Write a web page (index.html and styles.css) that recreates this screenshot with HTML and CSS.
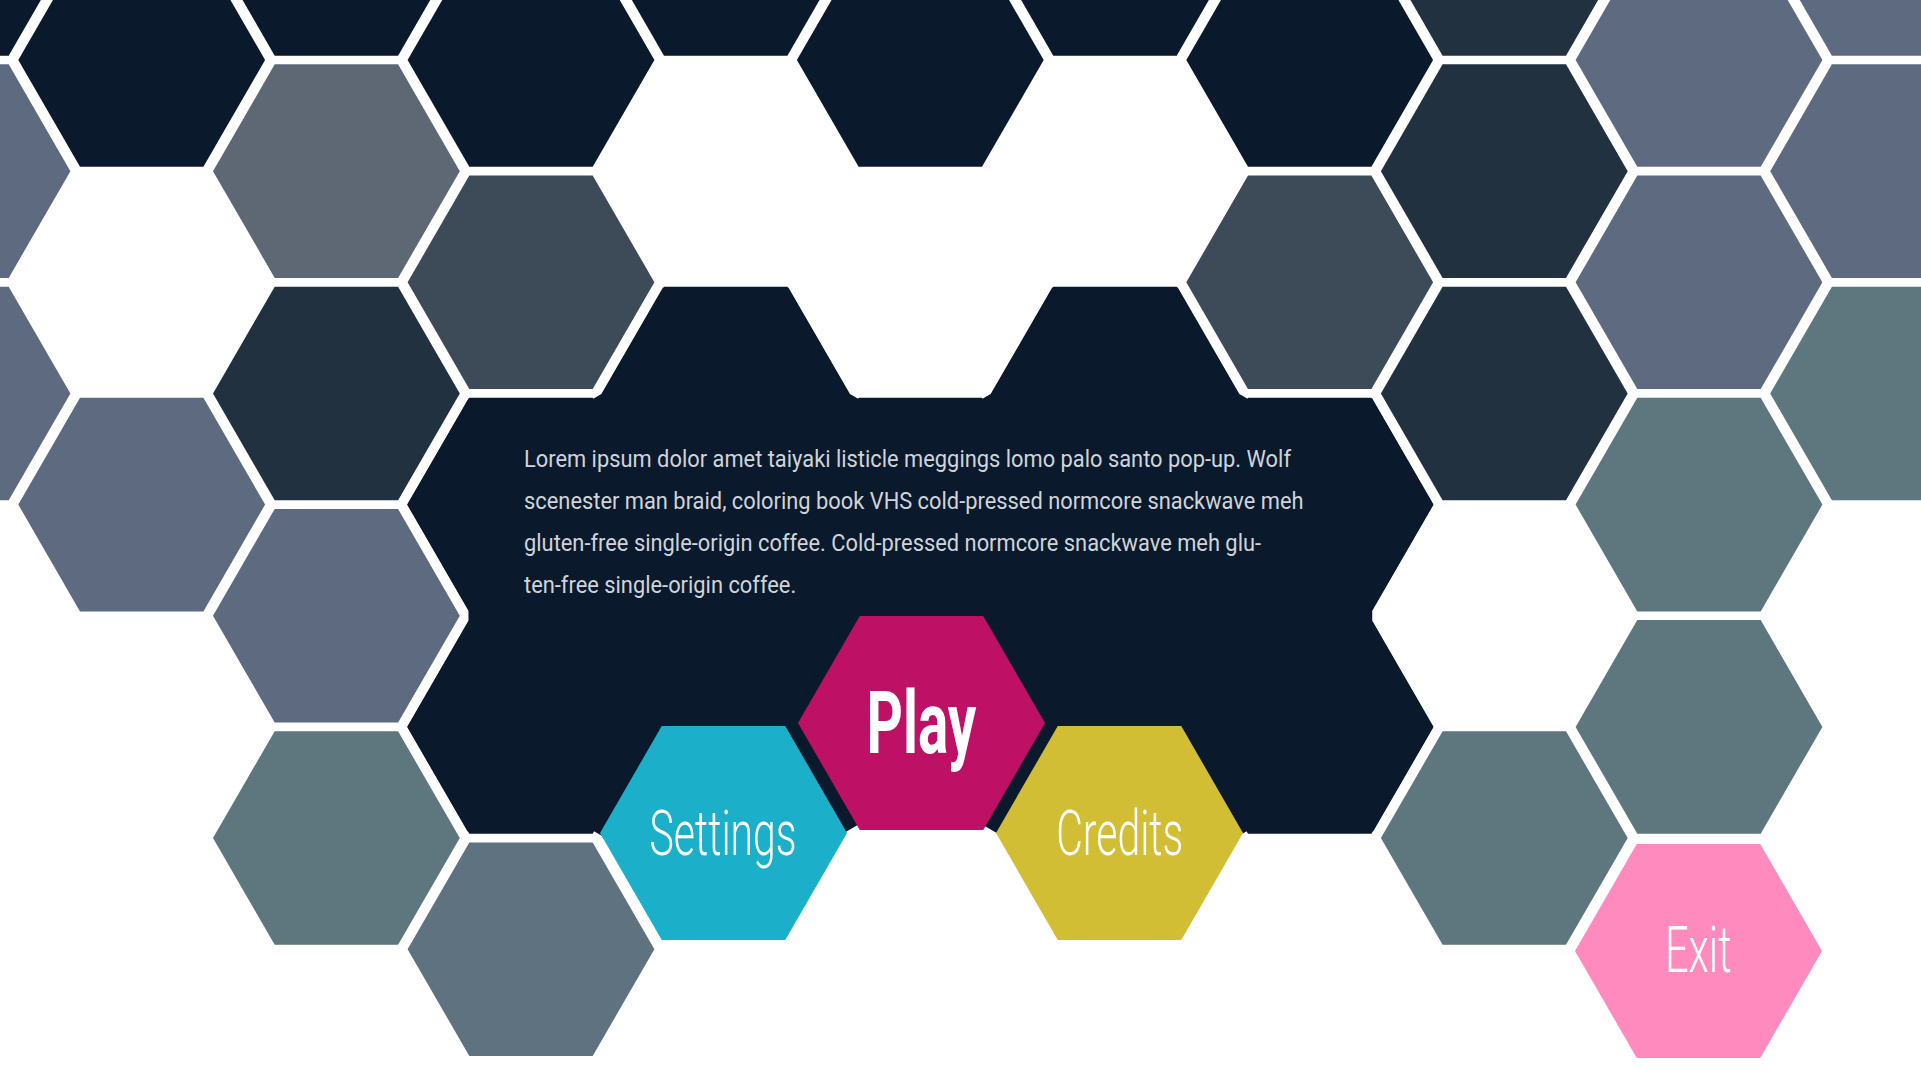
FILE: index.html
```html
<!DOCTYPE html>
<html lang="en">
<head>
<meta charset="utf-8">
<title>Hex Menu</title>
<link rel="stylesheet" href="styles.css">
</head>
<body>
<main class="stage">
  <svg class="mosaic" width="1921" height="1081" viewBox="0 0 1921 1081" aria-hidden="true">
    <defs>
      <polygon id="hx" points="-123.4,0 -61.7,-106.8 61.7,-106.8 123.4,0 61.7,106.8 -61.7,106.8"/>
      <polygon id="hxBig" points="-131.5,0 -65.7,-113.8 65.7,-113.8 131.5,0 65.7,113.8 -65.7,113.8"/>
    </defs>

    <!-- panel: enlarged cells fill the gaps between them -->
    <g class="navy">
      <use href="#hxBig" x="531" y="504.6"/>
      <use href="#hxBig" x="531" y="726.9"/>
      <use href="#hxBig" x="725.7" y="393.45"/>
      <use href="#hxBig" x="725.7" y="615.75"/>
      <use href="#hxBig" x="920.3" y="504.6"/>
      <use href="#hxBig" x="1115" y="393.45"/>
      <use href="#hxBig" x="1115" y="615.75"/>
      <use href="#hxBig" x="1309.7" y="504.6"/>
      <use href="#hxBig" x="1309.7" y="726.9"/>
      <use href="#hxBig" x="723.5" y="833"/>
      <use href="#hxBig" x="921.7" y="722.8"/>
      <use href="#hxBig" x="1119.6" y="833"/>
    </g>

    <!-- white gaps around the panel -->
    <g class="mask">
      <use href="#hx" x="336.4" y="393.45"/>
      <use href="#hx" x="336.4" y="615.75"/>
      <use href="#hx" x="336.4" y="838.05"/>
      <use href="#hx" x="531" y="282.3"/>
      <use href="#hx" class="mask-m" x="531" y="949.2"/>
      <use href="#hx" x="725.7" y="171.15"/>
      <use href="#hx" class="mask-l" x="725.7" y="1060.35"/>
      <use href="#hx" x="920.3" y="282.3"/>
      <use href="#hx" class="mask-xl" x="920.3" y="949.2"/>
      <use href="#hx" x="1115" y="171.15"/>
      <use href="#hx" class="mask-l" x="1115" y="1060.35"/>
      <use href="#hx" x="1309.7" y="282.3"/>
      <use href="#hx" class="mask-m" x="1309.7" y="949.2"/>
      <use href="#hx" x="1504.3" y="393.45"/>
      <use href="#hx" x="1504.3" y="615.75"/>
      <use href="#hx" x="1504.3" y="838.05"/>
    </g>

    <!-- cells -->
    <g class="navy">
      <use href="#hx" x="-53" y="-51.15"/>
      <use href="#hx" x="141.7" y="60"/>
      <use href="#hx" x="336.4" y="-51.15"/>
      <use href="#hx" x="531" y="60"/>
      <use href="#hx" x="725.7" y="-51.15"/>
      <use href="#hx" x="920.3" y="60"/>
      <use href="#hx" x="1115" y="-51.15"/>
      <use href="#hx" x="1309.7" y="60"/>
      <use href="#hx" x="531" y="504.6"/>
      <use href="#hx" x="531" y="726.9"/>
      <use href="#hx" x="725.7" y="393.45"/>
      <use href="#hx" x="725.7" y="615.75"/>
      <use href="#hx" x="920.3" y="504.6"/>
      <use href="#hx" x="1115" y="393.45"/>
      <use href="#hx" x="1115" y="615.75"/>
      <use href="#hx" x="1309.7" y="504.6"/>
      <use href="#hx" x="1309.7" y="726.9"/>
    </g>
    <g class="lavender">
      <use href="#hx" x="-53" y="171.15"/>
      <use href="#hx" x="-53" y="393.45"/>
      <use href="#hx" x="141.7" y="504.6"/>
      <use href="#hx" x="336.4" y="615.75"/>
      <use href="#hx" x="1699" y="60"/>
      <use href="#hx" x="1699" y="282.3"/>
      <use href="#hx" x="1893.6" y="-51.15"/>
      <use href="#hx" x="1893.6" y="171.15"/>
    </g>
    <g class="gray">
      <use href="#hx" x="336.4" y="171.15"/>
    </g>
    <g class="darkslate">
      <use href="#hx" x="336.4" y="393.45"/>
      <use href="#hx" x="1504.3" y="-51.15"/>
      <use href="#hx" x="1504.3" y="171.15"/>
      <use href="#hx" x="1504.3" y="393.45"/>
    </g>
    <g class="slate">
      <use href="#hx" x="531" y="282.3"/>
      <use href="#hx" x="1309.7" y="282.3"/>
    </g>
    <g class="teal">
      <use href="#hx" x="336.4" y="838.05"/>
      <use href="#hx" x="1504.3" y="838.05"/>
      <use href="#hx" x="1699" y="504.6"/>
      <use href="#hx" x="1699" y="726.9"/>
      <use href="#hx" x="1893.6" y="393.45"/>
    </g>
    <g class="steel">
      <use href="#hx" x="531" y="949.2"/>
    </g>
  </svg>

  <p class="intro">
    <span class="line">Lorem ipsum dolor amet taiyaki listicle meggings lomo palo santo pop-up. Wolf</span>
    <span class="line">scenester man braid, coloring book VHS cold-pressed normcore snackwave meh</span>
    <span class="line">gluten-free single-origin coffee. Cold-pressed normcore snackwave meh glu-</span>
    <span class="line">ten-free single-origin coffee.</span>
  </p>

  <nav class="menu">
    <button class="hex settings" type="button"><span class="label">Settings</span></button>
    <button class="hex play" type="button"><span class="label">Play</span></button>
    <button class="hex credits" type="button"><span class="label">Credits</span></button>
  </nav>

  <button class="hex exit" type="button"><span class="label">Exit</span></button>
</main>
</body>
</html>
```

FILE: styles.css
```css
html, body {
  margin: 0;
  padding: 0;
  background: #ffffff;
}

body {
  font-family: Roboto, "Liberation Sans", Arial, sans-serif;
}

.stage {
  position: relative;
  width: 1921px;
  height: 1081px;
  overflow: hidden;
  background: #ffffff;
}

.mosaic {
  position: absolute;
  left: 0;
  top: 0;
  display: block;
}

.navy { fill: #0a1a2c; }
.lavender { fill: #5e6a80; }
.gray { fill: #5e6874; }
.darkslate { fill: #223140; }
.slate { fill: #3d4a58; }
.teal { fill: #5e767e; }
.steel { fill: #5f7280; }

.mask {
  fill: #ffffff;
  stroke: #ffffff;
  stroke-width: 20px;
  stroke-linejoin: bevel;
}

.mask .mask-m { stroke-width: 24px; }
.mask .mask-l { stroke-width: 28px; }
.mask .mask-xl { stroke-width: 36px; }

.intro {
  position: absolute;
  left: 524px;
  top: 438px;
  margin: 0;
  color: #d0d4da;
  font-size: 23.5px;
  line-height: 42px;
  font-weight: 400;
  transform: scaleX(0.93);
  transform-origin: left top;
}

.line {
  display: block;
  white-space: nowrap;
}

.menu {
  position: absolute;
  left: 600px;
  top: 616px;
  display: flex;
  align-items: flex-end;
  height: 324px;
}

.hex {
  width: 247px;
  height: 214px;
  padding: 0;
  margin: 0;
  border: 0;
  clip-path: polygon(25% 0, 75% 0, 100% 50%, 75% 100%, 25% 100%, 0 50%);
  display: flex;
  align-items: center;
  justify-content: center;
  color: #ffffff;
  font-family: Roboto, "Liberation Sans", Arial, sans-serif;
  font-weight: 300;
  cursor: pointer;
  flex: none;
}

.menu .hex + .hex {
  margin-left: -49px;
}

.label {
  display: inline-block;
  line-height: 1;
  transform: scaleX(0.65);
  white-space: nowrap;
}

.settings {
  background: #1cafca;
  font-size: 63px;
}

.play {
  background: #be1064;
  font-size: 87px;
  font-weight: 700;
  margin-bottom: 110px;
}

.credits {
  background: #d2be35;
  font-size: 63px;
}

.exit {
  position: absolute;
  left: 1575px;
  top: 844px;
  background: #ff8bbe;
  font-size: 64px;
}
```
